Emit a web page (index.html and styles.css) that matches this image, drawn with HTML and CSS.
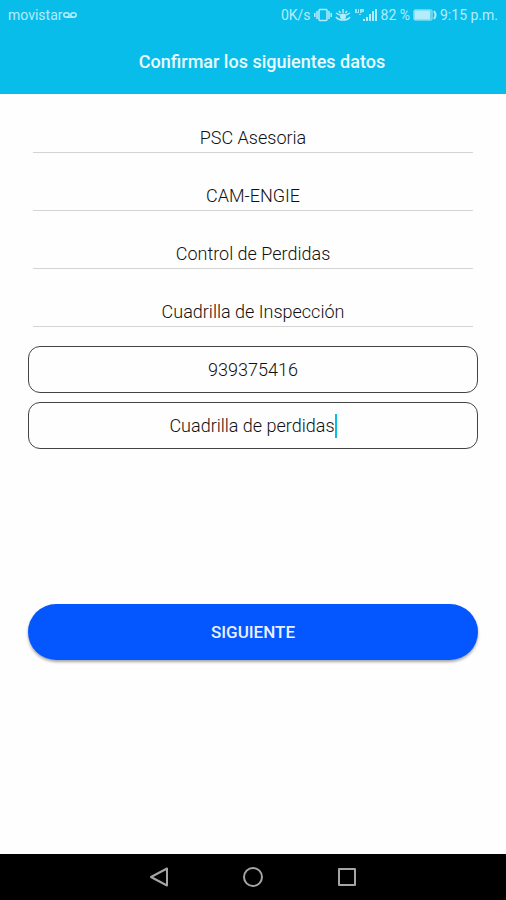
FILE: index.html
```html
<!DOCTYPE html>
<html lang="es">
<head>
  <meta charset="UTF-8" />
  <meta name="viewport" content="width=device-width, initial-scale=1.0" />
  <title>Confirmar los siguientes datos</title>
  <link rel="stylesheet" href="styles.css">
</head>
<body>
  <header>
    <div class="status-bar">
      <div class="carrier">
        <span>movistar</span>
        <svg width="14" height="8" viewBox="0 0 14 8" fill="none" stroke="currentColor" stroke-width="1.5">
          <ellipse cx="3.5" cy="4" rx="2.7" ry="2.2" />
          <ellipse cx="10.5" cy="4" rx="2.7" ry="2.2" />
          <path d="M3.5 6.2h7" />
        </svg>
      </div>
      <div class="indicators">
        <span>0K/s</span>
        <!-- vibrate -->
        <svg width="18" height="14" viewBox="0 0 18 14" fill="none" stroke="currentColor" stroke-width="1.5">
          <rect x="5" y="1.5" width="8" height="11" rx="1" />
          <path d="M3 3v8M15 3v8M.8 5v4M17.2 5v4" />
        </svg>
        <!-- eye comfort -->
        <svg width="16" height="14" viewBox="0 0 16 14" fill="none" stroke="currentColor" stroke-width="1.5">
          <path d="M1 5q7 5 14 0M1 9q2 3 7 3t7-3M4 3l1.5 2M12 3l-1.5 2M8 1v4" />
          <circle cx="8" cy="8.5" r="2.2" fill="currentColor" />
        </svg>
        <!-- mobile signal -->
        <svg width="24" height="14" viewBox="0 0 24 14" fill="currentColor">
          <path d="M1 1h2v3h1V1h1v4H1zM6 1h4v3H8v1H6zM5 6h2v1H5z" opacity=".8" />
          <path d="M9 11h2v2H9zM12 9h2v4h-2zM15 6h2v7h-2zM18 3h2v10h-2zM21 1h2v12h-2z" />
        </svg>
        <span>82 %</span>
        <!-- battery -->
        <svg width="24" height="12" viewBox="0 0 24 12" fill="none" stroke="currentColor">
          <rect x="1" y="1" width="18" height="10" rx="1" />
          <path d="M2 2h15v8H2z" fill="currentColor" />
          <path d="M21 2q3 4 0 8" stroke-width="2" />
        </svg>
        <span>9:15 p.m.</span>
      </div>
    </div>
    <h1>Confirmar los siguientes datos</h1>
  </header>

  <form class="data-form" onsubmit="return false">
    <input class="line-field" type="text" aria-label="Empresa" value="PSC Asesoria" readonly>
    <input class="line-field" type="text" aria-label="Contrato" value="CAM-ENGIE" readonly>
    <input class="line-field" type="text" aria-label="Área" value="Control de Perdidas" readonly>
    <input class="line-field" type="text" aria-label="Tipo de cuadrilla" value="Cuadrilla de Inspección" readonly>

    <label class="box-field">
      <input type="text" inputmode="tel" aria-label="Teléfono" value="939375416">
    </label>
    <label class="box-field">
      <input type="text" aria-label="Cuadrilla" value="Cuadrilla de perdidas">
      <span class="caret"></span>
    </label>

    <button class="next-button" type="submit">SIGUIENTE</button>
  </form>

  <nav class="nav-bar">
    <button type="button" aria-label="Atrás">
      <svg width="20" height="20" viewBox="0 0 20 20"><path d="M18 1.5v17L2 10z" /></svg>
    </button>
    <button type="button" aria-label="Inicio">
      <svg width="20" height="20" viewBox="0 0 20 20"><circle cx="10" cy="10" r="9" /></svg>
    </button>
    <button type="button" aria-label="Recientes">
      <svg width="20" height="20" viewBox="0 0 20 20"><rect x="2" y="2" width="16" height="16" /></svg>
    </button>
  </nav>
</body>
</html>
```
FILE: styles.css
```css
* {
  box-sizing: border-box;
}

body {
  margin: 0;
  min-height: 100vh;
  display: flex;
  flex-direction: column;
  font-family: Roboto, sans-serif;
  background: #fefefe;
  color: #333;
}

input,
button {
  font-family: inherit;
}

header {
  background: #09bdea;
  color: #e9fbff;
}

.status-bar {
  display: flex;
  justify-content: space-between;
  height: 30px;
  padding: 0 8px;
  font-size: 14px;
  color: #b5ecfb;
}

.carrier,
.indicators {
  display: flex;
  align-items: center;
}

.indicators {
  gap: 3px;
}

h1 {
  margin: 0;
  padding-left: 18px;
  font-size: 18px;
  font-weight: 500;
  line-height: 64px;
  text-align: center;
}

.data-form {
  flex: 1;
  display: flex;
  flex-direction: column;
  padding: 1px 28px 0;
}

.line-field {
  height: 58px;
  margin: 0 5px;
  padding: 28px 0 0;
  border: none;
  border-bottom: 1px solid #d4d4d4;
  background: transparent;
  font-size: 18px;
  font-weight: 300;
  color: #111;
  text-align: center;
  outline: none;
}

.box-field {
  display: flex;
  align-items: center;
  justify-content: center;
  height: 47px;
  margin-top: 9px;
  border: 1px solid #444;
  border-radius: 12px;
}

.line-field + .box-field {
  margin-top: 19px;
}

.box-field input {
  field-sizing: content;
  max-width: 90%;
  padding: 0;
  border: none;
  background: transparent;
  font-size: 18px;
  font-weight: 300;
  color: #111;
  text-align: center;
  outline: none;
}

.caret {
  width: 2px;
  height: 24px;
  background: #09bdea;
}

.next-button {
  height: 56px;
  margin-top: 155px;
  border: none;
  border-radius: 28px;
  background: #0457ff;
  box-shadow: 0 2px 3px rgba(0, 0, 0, 0.35);
  color: #e9f0ff;
  font-size: 17px;
  font-weight: 500;
  cursor: pointer;
}

.nav-bar {
  display: flex;
  justify-content: center;
  gap: 54px;
  height: 46px;
  background: #000;
}

.nav-bar button {
  display: flex;
  align-items: center;
  justify-content: center;
  width: 40px;
  padding: 0;
  border: none;
  background: none;
}

.nav-bar svg {
  fill: none;
  stroke: #a5a5a5;
  stroke-width: 2;
  stroke-linejoin: round;
}
```
